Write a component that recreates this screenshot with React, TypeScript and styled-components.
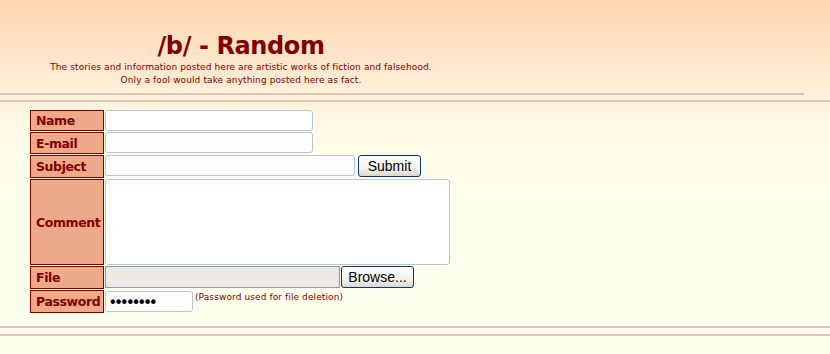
import styled, { createGlobalStyle } from "styled-components";

const GlobalStyle = createGlobalStyle`
  html, body {
    margin: 0;
    padding: 0;
  }
  body {
    background: linear-gradient(#fed6af 0px, #ffeed8 90px, #fffbe6 130px, #ffffee 200px) no-repeat #ffffee;
    min-height: 354px;
    font-family: "DejaVu Sans", Verdana, sans-serif;
    color: #800000;
  }
`;

const Header = styled.div`
  width: 482px;
  padding-top: 32px;
  text-align: center;
`;

const Title = styled.h1`
  margin: 0;
  font-family: "DejaVu Sans", Tahoma, sans-serif;
  font-size: 24px;
  font-weight: bold;
  letter-spacing: -0.4px;
  line-height: 28px;
  color: #800000;
`;

const Notice = styled.div`
  font-size: 9px;
  line-height: 13px;
  letter-spacing: 0.1px;
  margin-top: 1px;
`;

const Rule = styled.hr<{ $width?: string }>`
  margin: 0;
  height: 0;
  border: none;
  border-top: 2px solid #dcc4b8;
  width: ${(p) => p.$width ?? "100%"};
`;

const TopRules = styled.div`
  display: flex;
  flex-direction: column;
  gap: 5px;
  margin-top: 6px;
`;

const Form = styled.form`
  display: grid;
  grid-template-columns: 74px auto;
  column-gap: 1px;
  row-gap: 1px;
  margin: 8px 0 0 30px;
  align-items: start;
`;

const Label = styled.div<{ $h: number }>`
  box-sizing: border-box;
  height: ${(p) => p.$h}px;
  display: flex;
  align-items: center;
  padding-left: 5px;
  background: #eeaa88;
  border: 1px solid #800000;
  font-family: "DejaVu Sans", Tahoma, sans-serif;
  font-weight: bold;
  font-size: 12.5px;
  letter-spacing: -0.4px;
  color: #800000;
`;

const Field = styled.div<{ $gap?: number }>`
  display: flex;
  align-items: flex-start;
  gap: ${(p) => p.$gap ?? 3}px;
`;

const TextInput = styled.input<{ $w: number }>`
  box-sizing: border-box;
  width: ${(p) => p.$w}px;
  height: 21px;
  margin: 0;
  border: 1px solid #b5c6d4;
  border-radius: 3px;
  background: #ffffff;
  padding: 1px 4px;
  font-family: "Liberation Sans", Arial, sans-serif;
  font-size: 13px;
`;

const TextArea = styled.textarea`
  box-sizing: border-box;
  width: 345px;
  height: 86px;
  margin: 0;
  border: 1px solid #b5c6d4;
  border-radius: 3px;
  background: #ffffff;
  resize: none;
  display: block;
`;

const FileBox = styled.div`
  box-sizing: border-box;
  width: 235px;
  height: 22px;
  background: #ebe9e1;
  border: 1px solid #7f9db9;
`;

const Button = styled.button<{ $w: number }>`
  box-sizing: border-box;
  width: ${(p) => p.$w}px;
  height: 22px;
  margin: 0;
  padding: 0;
  border: 1px solid #003c74;
  border-radius: 3px;
  background: linear-gradient(#ffffff, #f4f3ee 60%, #dcd8cc);
  font-family: "Liberation Sans", Arial, sans-serif;
  font-size: 14px;
  color: #000000;
`;

const Hint = styled.span`
  font-size: 9px;
  line-height: 12px;
  padding-top: 1px;
  margin-left: -1px;
  letter-spacing: 0.1px;
`;

const Password = styled(TextInput)`
  font-size: 16px;
  font-weight: bold;
  letter-spacing: 0.2px;
  padding-left: 4px;
  margin-top: 1px;
`;

const BottomRules = styled.div`
  display: flex;
  flex-direction: column;
  gap: 6px;
  margin-top: 13px;
`;

export default function App() {
  return (
    <>
      <GlobalStyle />
      <Header>
        <Title>/b/ - Random</Title>
        <Notice>
          The stories and information posted here are artistic works of fiction and falsehood.
          <br />
          Only a fool would take anything posted here as fact.
        </Notice>
      </Header>
      <TopRules>
        <Rule $width="804px" />
        <Rule />
      </TopRules>
      <Form onSubmit={(e) => e.preventDefault()}>
        <Label $h={21}>Name</Label>
        <Field>
          <TextInput $w={208} type="text" />
        </Field>
        <Label $h={22}>E-mail</Label>
        <Field>
          <TextInput $w={208} type="text" />
        </Field>
        <Label $h={23}>Subject</Label>
        <Field>
          <TextInput $w={250} type="text" />
          <Button $w={63} type="submit">Submit</Button>
        </Field>
        <Label $h={86}>Comment</Label>
        <Field>
          <TextArea />
        </Field>
        <Label $h={23}>File</Label>
        <Field $gap={1}>
          <FileBox />
          <Button $w={73} type="button">Browse...</Button>
        </Field>
        <Label $h={23}>Password</Label>
        <Field>
          <Password $w={88} type="password" defaultValue="abcdefgh" />
          <Hint>(Password used for file deletion)</Hint>
        </Field>
      </Form>
      <BottomRules>
        <Rule />
        <Rule />
      </BottomRules>
    </>
  );
}
